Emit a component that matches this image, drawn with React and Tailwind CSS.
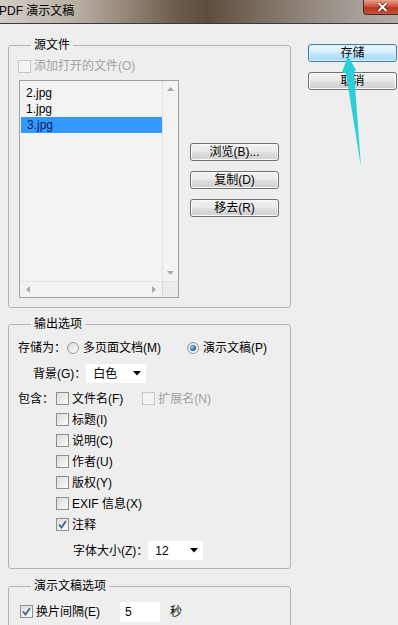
import React from 'react'

const FONT = "font-['Liberation_Sans','Noto_Sans_CJK_SC',sans-serif]"

function Btn({ children, primary, className = '' }) {
  const skin = primary
    ? 'border-[#3c7fb1] bg-[linear-gradient(#eaf6fd_0%,#d9f0fc_45%,#bee6fd_55%,#a7d9f5_100%)] shadow-[inset_0_0_0_1px_#d8f0fc]'
    : 'border-[#707070] bg-[linear-gradient(#f2f2f2_0%,#ebebeb_45%,#dddddd_55%,#cfcfcf_100%)] shadow-[inset_0_0_0_1px_#fbfbfb]'
  return (
    <div
      className={`flex h-[18px] w-[89px] items-center justify-center rounded-[3px] border text-[12px] leading-none text-black ${skin} ${className}`}
    >
      {children}
    </div>
  )
}

function Check({ checked, disabled }) {
  return (
    <span
      className={`relative inline-flex h-[13px] w-[13px] shrink-0 items-center justify-center border ${
        disabled ? 'border-[#c8c8c8] bg-[#f4f4f4]' : 'border-[#8e8f8f] bg-[linear-gradient(135deg,#dcdcdc,#fbfbfb)]'
      }`}
    >
      {checked && (
        <svg width="9" height="9" viewBox="0 0 9 9">
          <path d="M1 4.5 L3.5 7.5 L8 1" fill="none" stroke="#4a5f97" strokeWidth="1.8" />
        </svg>
      )}
    </span>
  )
}

function Radio({ checked }) {
  return (
    <span className="inline-flex h-[12px] w-[12px] shrink-0 items-center justify-center rounded-full border border-[#9a9a9a] bg-[linear-gradient(135deg,#d6d6d6,#ffffff)]">
      {checked && (
        <span className="h-[6px] w-[6px] rounded-full bg-[radial-gradient(circle_at_35%_35%,#8fd0f5,#1d5a87_70%)]" />
      )}
    </span>
  )
}

function Caret() {
  return (
    <svg width="8" height="5" viewBox="0 0 8 5">
      <polygon points="0,0 8,0 4,4.5" fill="#000" />
    </svg>
  )
}

function Dropdown({ value, className = '' }) {
  return (
    <div
      className={`flex h-[19px] items-center justify-between bg-white pl-[7px] pr-[5px] text-[12px] ${className}`}
    >
      <span>{value}</span>
      <Caret />
    </div>
  )
}

function Group({ title, className = '', children }) {
  return (
    <fieldset className={`rounded-[3px] border border-[#b4b4b4] px-[10px] ${className}`}>
      <legend className="ml-[12px] px-[3px] text-[12px] leading-4 text-black">{title}</legend>
      {children}
    </fieldset>
  )
}

function Row({ className = '', children }) {
  return <div className={`flex h-[21px] items-center text-[12px] ${className}`}>{children}</div>
}

function Option({ label, checked, disabled, className = '' }) {
  return (
    <div className={`flex items-center gap-[3px] ${className}`}>
      <Check checked={checked} disabled={disabled} />
      <span className={disabled ? 'text-[#a3a3a3]' : 'text-black'}>{label}</span>
    </div>
  )
}

const FILES = ['2.jpg', '1.jpg', '3.jpg']

function FileList() {
  return (
    <div className="flex h-[218px] w-[160px] flex-col border border-[#a0a0a0] bg-[#f3f3f3]">
      <div className="flex min-h-0 flex-1">
        <div className="flex-1 pt-[4px]">
          {FILES.map((f, i) => (
            <div
              key={f}
              className={`h-[16px] pl-[6px] text-[12px] leading-[16px] ${
                i === 2 ? 'ml-[1px] h-[14px] overflow-hidden bg-[#3399ff] leading-[15px] text-[#0a1e5a]' : 'text-black'
              }`}
            >
              {f}
            </div>
          ))}
        </div>
        <div className="flex w-[16px] flex-col items-center justify-between border-l border-[#e2e2e2] py-[6px]">
          <svg width="7" height="4" viewBox="0 0 7 4">
            <polygon points="0,4 7,4 3.5,0" fill="#a9a9a9" />
          </svg>
          <svg width="7" height="4" viewBox="0 0 7 4">
            <polygon points="0,0 7,0 3.5,4" fill="#a9a9a9" />
          </svg>
        </div>
      </div>
      <div className="flex h-[16px] border-t border-[#e2e2e2]">
        <div className="flex flex-1 items-center justify-between px-[6px]">
          <svg width="4" height="7" viewBox="0 0 4 7">
            <polygon points="4,0 4,7 0,3.5" fill="#a9a9a9" />
          </svg>
          <svg width="4" height="7" viewBox="0 0 4 7">
            <polygon points="0,0 0,7 4,3.5" fill="#a9a9a9" />
          </svg>
        </div>
        <div className="w-[16px] border-l border-[#d8d8d8] bg-[#ececec]" />
      </div>
    </div>
  )
}

export default function App() {
  return (
    <div className={`relative h-[625px] w-[398px] overflow-hidden bg-[#eeeeee] text-black ${FONT}`}>
      {/* title bar */}
      <div className="flex h-[24px] items-start justify-between border-b border-[#3a3a3a] bg-[linear-gradient(90deg,#d3cdc7_0%,#b7aca1_20%,#6b5a49_45%,#5e4c3c_52%,#8d8278_75%,#a39c95_88%,#b1aba4_100%)]">
        <span className="ml-[-1px] mt-[3px] text-[12px] leading-4 text-black">PDF 演示文稿</span>
        <div className="mr-[-4px] flex h-[15px] w-[39px] items-center justify-center rounded-bl-[4px] border border-t-0 border-[#4a2a22] bg-[linear-gradient(#e8a08e_0%,#d0563e_45%,#b5351f_55%,#c9543a_100%)]">
          <svg width="11" height="10" viewBox="0 0 11 10">
            <path d="M1.5 1 L9.5 9 M9.5 1 L1.5 9" stroke="#5a1a10" strokeWidth="3.4" />
            <path d="M1.5 1 L9.5 9 M9.5 1 L1.5 9" stroke="#ffffff" strokeWidth="2" />
          </svg>
        </div>
      </div>

      <div className="flex pl-[8px]">
        {/* left column */}
        <div className="w-[283px]">
          <Group title="源文件" className="mt-[13px] pb-[9px]">
            <Option label="添加打开的文件(O)" disabled className="ml-[-1px] mt-[6px] h-[14px] text-[12px]" />
            <div className="mt-[7px] flex">
              <FileList />
              <div className="ml-[11px] mt-[63px] flex flex-col gap-[10px]">
                <Btn>浏览(B)...</Btn>
                <Btn>复制(D)</Btn>
                <Btn>移去(R)</Btn>
              </div>
            </div>
          </Group>

          <Group title="输出选项" className="mt-[8px] pb-[7px]">
            <Row className="mt-[5px]">
              <span className="ml-[-1px]">存储为：</span>
              <span className="ml-[1px] flex items-center gap-[4px]">
                <Radio />
                <span>多页面文档(M)</span>
              </span>
              <span className="ml-[26px] flex items-center gap-[4px]">
                <Radio checked />
                <span>演示文稿(P)</span>
              </span>
            </Row>
            <Row className="mt-[5px]">
              <span className="ml-[14px]">背景(G)：</span>
              <Dropdown value="白色" className="w-[60px]" />
            </Row>
            <Row className="mt-[4px]">
              <span className="ml-[-1px]">包含：</span>
              <Option label="文件名(F)" className="ml-[2px]" />
              <Option label="扩展名(N)" disabled className="ml-[19px]" />
            </Row>
            {['标题(I)', '说明(C)', '作者(U)', '版权(Y)', 'EXIF 信息(X)'].map((l) => (
              <Row key={l}>
                <Option label={l} className="ml-[37px]" />
              </Row>
            ))}
            <Row>
              <Option label="注释" checked className="ml-[37px]" />
            </Row>
            <Row className="mt-[5px]">
              <span className="ml-[54px]">字体大小(Z)：</span>
              <Dropdown value="12" className="w-[55px]" />
            </Row>
          </Group>

          <Group title="演示文稿选项" className="mt-[9px] pb-[10px]">
            <Row className="mt-[7px]">
              <Option label="换片间隔(E)" checked className="ml-[1px]" />
              <div className="ml-[20px] flex h-[20px] w-[40px] items-center bg-white pl-[5px]">5</div>
              <span className="ml-[10px]">秒</span>
            </Row>
          </Group>
        </div>

        {/* right column */}
        <div className="ml-[17px] mt-[20px] flex flex-col gap-[10px]">
          <Btn primary>存储</Btn>
          <Btn>取消</Btn>
        </div>
      </div>

      {/* annotation arrow */}
      <svg
        className="pointer-events-none absolute left-[340px] top-[54px]"
        width="24"
        height="116"
        viewBox="0 0 24 116"
      >
        <polygon points="8,2 16,16 14,18 21,113 6,20 2,18" fill="#2bd0d6" />
      </svg>
    </div>
  )
}
